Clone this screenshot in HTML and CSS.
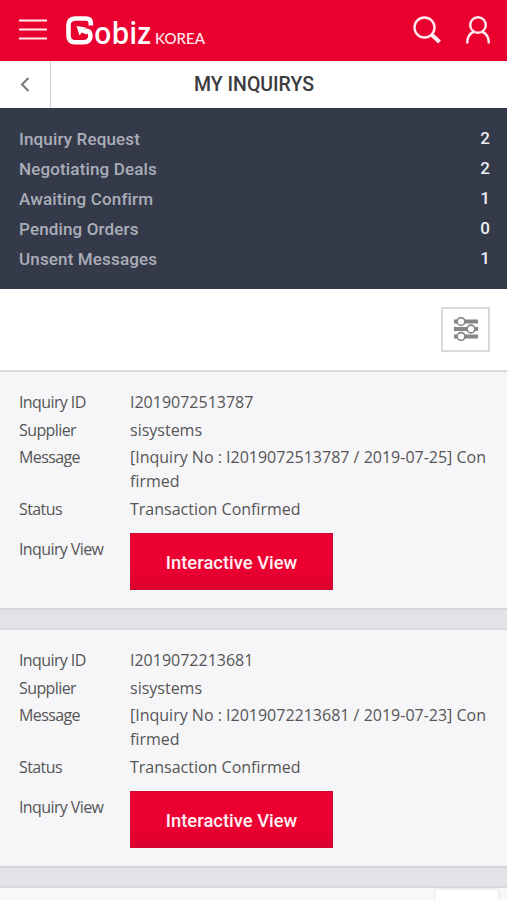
FILE: index.html
```
<!doctype html>
<html lang="en">
  <head>
    <meta charset="utf-8">
    <meta name="viewport" content="width=device-width, initial-scale=1">
    <title>My Inquirys - Gobiz Korea</title>
    <link rel="stylesheet" href="styles.css">
  </head>
<body>
    <header class="header">
      <svg class="menu" width="28" height="21" viewBox="0 0 28 21">
        <path d="M0 1.500h28M0 10.500h28M0 19.500h28"/>
      </svg>
      <svg class="logo" width="142" height="48" viewBox="0 -8 142 48">
        <!-- mark with the arrow -->
        <path class="mark" d="M24.800 10.500V7.500Q24.500 3.500 20 3.500H9Q2.500 4 2.500 10V20.500Q2.500 27 9 27.300H17.500Q24.500 27 24.500 20.500Q24.300 15.500 19 15.500"/>
        <path class="arrow" d="M10.500 11l9.500 1.500-1.800 2 5.300 1.500-3 3.500-4.800-2-2.200 3z"/>
        <text class="name" x="28" y="29.300" textLength="57" lengthAdjust="spacingAndGlyphs">obiz</text>
        <text class="country" x="89" y="29.300" textLength="50" lengthAdjust="spacingAndGlyphs">KOREA</text>
      </svg>
      <div class="tools">
        <svg width="28" height="28" viewBox="0 0 28 28">
          <circle cx="11.500" cy="11.500" r="10"/>
          <path class="handle" d="M19 19l7.500 7"/>
        </svg>
        <svg width="26" height="28" viewBox="0 0 26 28">
          <circle cx="13" cy="9" r="7.800"/>
          <path d="M2.200 27.500C2.200 21 5 17 9.500 15.500M16.500 15.500c4.500 1.500 7.300 5.500 7.300 12"/>
        </svg>
      </div>
    </header>

    <div class="title">
      <a class="back">
        <svg width="10" height="15" viewBox="0 0 10 15"><path d="M8.500 1L2 7.500 8.500 14"/></svg>
      </a>
      <h1>MY INQUIRYS</h1>
    </div>

    <ul class="summary">
      <li><span>Inquiry Request</span><b>2</b></li>
      <li><span>Negotiating Deals</span><b>2</b></li>
      <li><span>Awaiting Confirm</span><b>1</b></li>
      <li><span>Pending Orders</span><b>0</b></li>
      <li><span>Unsent Messages</span><b>1</b></li>
    </ul>

    <div class="filter">
      <button>
        <svg width="24" height="24" viewBox="0 0 24 24">
          <path d="M0 4.500h24M0 12h24M0 19.500h24"/>
          <circle cx="7" cy="4.500" r="3.900"/>
          <circle cx="17" cy="12" r="3.900"/>
          <circle cx="7" cy="19.500" r="3.900"/>
        </svg>
      </button>
    </div>

    <div class="list">
      <div class="card">
        <div class="row"><span class="label">Inquiry ID</span><span class="value">I2019072513787</span></div>
        <div class="row"><span class="label">Supplier</span><span class="value">sisystems</span></div>
        <div class="row"><span class="label">Message</span><span class="value">[Inquiry No : I2019072513787 / 2019-07-25] Con<br>firmed</span></div>
        <div class="row"><span class="label">Status</span><span class="value">Transaction Confirmed</span></div>
        <div class="row view"><span class="label">Inquiry View</span><a class="btn">Interactive View</a></div>
      </div>
      <div class="card">
        <div class="row"><span class="label">Inquiry ID</span><span class="value">I2019072213681</span></div>
        <div class="row"><span class="label">Supplier</span><span class="value">sisystems</span></div>
        <div class="row"><span class="label">Message</span><span class="value">[Inquiry No : I2019072213681 / 2019-07-23] Con<br>firmed</span></div>
        <div class="row"><span class="label">Status</span><span class="value">Transaction Confirmed</span></div>
        <div class="row view"><span class="label">Inquiry View</span><a class="btn">Interactive View</a></div>
      </div>
      <div class="card next"></div>
    </div>
    <div class="float"></div>
</body>
</html>
```
FILE: styles.css
```
* {
    box-sizing: border-box;
}

body {
    margin: 0;
    height: 900px;
    overflow: hidden;
    background: #fff;
    color: #555;
    font-family: "Open Sans", sans-serif;
}

.header {
    display: flex;
    align-items: center;
    height: 61px;
    padding: 0 16px 0 19px;
    background: #ea002f;
}

.header svg {
    fill: none;
    stroke: #ffe9ee;
    stroke-width: 2.4;
}

.header .menu {
    stroke-width: 2.2;
    margin-bottom: 2px;
}

.header .logo {
    margin-left: 19px;
    stroke: none;
}

.logo .mark {
    stroke: #fff;
    stroke-width: 4.6;
}

.logo .arrow,
.logo text {
    fill: #fff;
}

.name {
    font: 600 31px "Open Sans", sans-serif;
}

.logo .country {
    fill: #ffe9ee;
    font: 500 14.5px Lato, sans-serif;
}

.tools {
    display: flex;
    gap: 24px;
    margin: 0 0 2px auto;
}

.tools .handle {
    stroke-width: 4;
}

.title {
    display: flex;
    align-items: center;
    height: 47px;
}

.back {
    display: flex;
    align-items: center;
    justify-content: center;
    width: 51px;
    height: 47px;
    border-right: 1px solid #d2d2d4;
}

.back svg {
    fill: none;
    stroke: #777;
    stroke-width: 2;
}

.title h1 {
    flex: 1;
    margin: 0 50px 0 0;
    color: #3b3b3d;
    font: 500 19.5px/46px Roboto, sans-serif;
    text-align: center;
}

.summary {
    height: 181px;
    margin: 0;
    padding: 16px 17px 0 19px;
    list-style: none;
    background: #343a49;
    color: #abadb8;
    font: 500 17px/30px Roboto, sans-serif;
    letter-spacing: 0.15px;
}

.summary li {
    display: flex;
    justify-content: space-between;
}

.summary b {
    color: #eceef6;
    font-weight: 500;
    letter-spacing: 0;
    line-height: 29px;
}

.filter {
    display: flex;
    justify-content: flex-end;
    height: 81px;
    padding: 18px 17px 0;
}

.filter button {
    display: flex;
    align-items: center;
    justify-content: center;
    width: 49px;
    height: 45px;
    padding: 0 0 1px;
    border: 2px solid #d9d9da;
    background: #fff;
}

.filter svg {
    fill: #fff;
    stroke: #858587;
    stroke-width: 1.6;
}

.filter path {
    stroke-width: 4;
}

.list {
    display: grid;
    gap: 18px;
    background: #e3e2e7;
}

.card {
    height: 240px;
    padding: 18px 19px 0;
    border-top: 2px solid #dadadd;
    border-bottom: 2px solid #d6d6da;
    background: #f6f6f9;
}

.card.next {
    height: 20px;
    background: #f8f8f8;
}

.row {
    display: flex;
    margin-bottom: 3.6px;
    font-size: 16px;
    line-height: 24px;
}

.label {
    width: 111px;
    letter-spacing: -0.6px;
}

.view {
    margin-top: 12px;
}

.view .label {
    line-height: 32px;
}

.btn {
    width: 203px;
    height: 57px;
    border: 1px solid #cf0832;
    background: linear-gradient(#ec0031 60%, #dc002e);
    color: #fff1f4;
    font: 500 18.4px/57px Roboto, sans-serif;
    text-align: center;
}

/* top button, floats over the list */
.float {
    position: absolute;
    top: 890px;
    left: 436px;
    width: 62px;
    height: 10px;
    background: #fff;
    box-shadow: 0 0 4px rgba(0, 0, 0, 0.1);
}
```
